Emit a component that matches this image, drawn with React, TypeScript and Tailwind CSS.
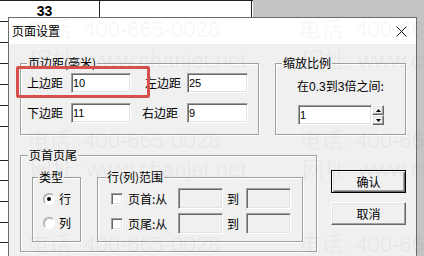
import React from "react";

const sheetRows = [
  "h-[22px] border-t",
  "h-[21px]",
  "h-[21px]",
  "h-[21px]",
  "h-[21px]",
  "h-[21px]",
  "h-[34px]",
  "h-[20px]",
  "h-[21px]",
  "h-[21px]",
  "h-[20px]",
  "h-[20px]",
];

const marks = [
  { cls: "left-[27px] top-[17px]", text: "电话: 400-665-0028" },
  { cls: "left-[299px] top-[17px]", text: "电话: 400-665-0028" },
  { cls: "left-[30px] top-[48px]", text: "网址: www.chanjet.net" },
  { cls: "left-[302px] top-[48px]", text: "网址: www.chanjet.net" },
  { cls: "left-[27px] top-[128px]", text: "电话: 400-665-0028" },
  { cls: "left-[299px] top-[128px]", text: "电话: 400-665-0028" },
  { cls: "left-[30px] top-[157px]", text: "网址: www.chanjet.net" },
  { cls: "left-[302px] top-[157px]", text: "网址: www.chanjet.net" },
  { cls: "left-[27px] top-[232px]", text: "电话: 400-665-0028" },
  { cls: "left-[299px] top-[232px]", text: "电话: 400-665-0028" },
];

const sunken =
  "border border-t-[#a0a0a0] border-l-[#a0a0a0] border-r-white border-b-white shadow-[inset_1px_1px_0_#696969,inset_-1px_-1px_0_#e3e3e3]";

const raised =
  "border border-t-white border-l-white border-r-[#696969] border-b-[#696969] shadow-[inset_-1px_-1px_0_#a0a0a0,inset_1px_1px_0_#e3e3e3]";

const GroupBox = ({ title, box, legend, children }: any) => {
  return (
    <div
      className={`relative border border-[#a0a0a0] shadow-[1px_1px_0_#fff,inset_1px_1px_0_#fff] ${box}`}
    >
      <span
        className={`absolute -top-[9px] bg-[#f0f0f0] px-[1px] text-[12px] leading-[16px] ${legend}`}
      >
        {title}
      </span>
      {children}
    </div>
  );
};

const Field = ({ value, w, off }: any) => {
  return (
    <div
      className={`flex items-center pl-[1px] text-[11px] font-['Liberation_Sans',sans-serif] ${sunken} ${w} ${
        off ? "bg-[#f0f0f0]" : "bg-white"
      }`}
    >
      {value}
    </div>
  );
};

const Radio = ({ checked }: any) => {
  return (
    <div className="flex h-[12px] w-[12px] items-center justify-center rounded-full border border-t-[#a0a0a0] border-l-[#a0a0a0] border-r-white border-b-white bg-white shadow-[inset_1px_1px_0_#c8c8c8]">
      {checked && <div className="h-[4px] w-[4px] rounded-full bg-black" />}
    </div>
  );
};

const Sheet = () => {
  return (
    <div className="w-[253px] bg-white">
      {sheetRows.map((h, i) => (
        <div key={i} className={`flex border-b border-[#222] ${h}`}>
          <div className="flex w-[100px] items-center justify-center border-r border-[#222] pr-[10px]">
            {i === 0 && (
              <span className="font-['Liberation_Sans',sans-serif] text-[14px] font-bold leading-[20px]">
                33
              </span>
            )}
          </div>
          <div className="w-[152px] border-r border-[#222]" />
        </div>
      ))}
    </div>
  );
};

const Dialog = () => {
  return (
    <div className="absolute left-[8px] top-[17px] flex h-[250px] w-[409px] flex-col border border-[#6b6b6b] bg-[#f0f0f0]">
      <div className="flex h-[26px] items-center justify-between bg-white pl-[3px] pr-[9px]">
        <span className="text-[12px] leading-[16px]">页面设置</span>
        <svg width="11" height="11" viewBox="0 0 11 11">
          <path d="M0.5 0.5L10.5 10.5M10.5 0.5L0.5 10.5" stroke="#111" strokeWidth="1" />
        </svg>
      </div>

      <div className="pl-[11px] pt-[19px] text-[12px] leading-[16px]">
        <div className="flex gap-[16px]">
          <GroupBox title="页边距(毫米)" box="w-[239px] h-[72px]" legend="left-[6px]">
            <div className="flex flex-col gap-[10px] pl-[6px] pt-[9px]">
              <div className="flex h-[20px] items-center">
                <span className="w-[44px]">上边距</span>
                <Field value="10" w="w-[60px] h-[20px]" />
                <span className="ml-[14px] w-[42px]">左边距</span>
                <Field value="25" w="w-[61px] h-[20px]" />
              </div>
              <div className="flex h-[20px] items-center">
                <span className="w-[44px]">下边距</span>
                <Field value="11" w="w-[60px] h-[20px]" />
                <span className="ml-[11px] w-[45px]">右边距</span>
                <Field value="9" w="w-[61px] h-[20px]" />
              </div>
            </div>
          </GroupBox>

          <GroupBox title="缩放比例" box="w-[131px] h-[72px]" legend="left-[6px]">
            <div className="pl-[21px] pt-[14px]">
              <p>
                在<span className="font-['Liberation_Sans',sans-serif]">0.3</span>到
                <span className="font-['Liberation_Sans',sans-serif]">3</span>倍之间:
              </p>
              <div className="ml-[1px] mt-[10px] flex">
                <Field value="1" w="w-[74px] h-[20px]" />
                <div className="flex flex-col">
                  <div className={`flex h-[10px] w-[12px] items-center justify-center bg-[#f0f0f0] ${raised}`}>
                    <svg width="5" height="3" viewBox="0 0 5 3">
                      <path d="M2.5 0L5 3H0Z" fill="#000" />
                    </svg>
                  </div>
                  <div className={`flex h-[10px] w-[12px] items-center justify-center bg-[#f0f0f0] ${raised}`}>
                    <svg width="5" height="3" viewBox="0 0 5 3">
                      <path d="M0 0H5L2.5 3Z" fill="#000" />
                    </svg>
                  </div>
                </div>
              </div>
            </div>
          </GroupBox>
        </div>

        <div className="mt-[20px] flex">
          <GroupBox title="页首页尾" box="w-[297px] h-[97px]" legend="left-[7px]">
            <div className="flex gap-[16px] pl-[11px] pt-[21px]">
              <GroupBox title="类型" box="w-[49px] h-[65px]" legend="left-[5px]">
                <div className="flex flex-col gap-[8px] pl-[10px] pt-[13px]">
                  <div className="flex h-[16px] items-center gap-[4px]">
                    <Radio checked />
                    <span>行</span>
                  </div>
                  <div className="flex h-[16px] items-center gap-[4px]">
                    <Radio />
                    <span>列</span>
                  </div>
                </div>
              </GroupBox>

              <GroupBox title="行(列)范围" box="w-[206px] h-[65px]" legend="left-[8px]">
                <div className="flex flex-col gap-[4px] pl-[13px] pt-[10px]">
                  {["页首", "页尾"].map((label) => (
                    <div key={label} className="flex h-[21px] items-center">
                      <div className={`h-[12px] w-[12px] bg-white ${sunken}`} />
                      <span className="ml-[5px] w-[50px]">{label}:从</span>
                      <Field value="" w="w-[45px] h-[21px]" off />
                      <span className="w-[23px] pl-[4px]">到</span>
                      <Field value="" w="w-[45px] h-[21px]" off />
                    </div>
                  ))}
                </div>
              </GroupBox>
            </div>
          </GroupBox>

          <div className="ml-[14px] mt-[15px] flex flex-col gap-[9px]">
            <button className="flex h-[23px] w-[75px] items-center justify-center border border-black bg-[#f0f0f0] shadow-[inset_1px_1px_0_#fff,inset_-1px_-1px_0_#696969,inset_2px_2px_0_#e3e3e3,inset_-2px_-2px_0_#a0a0a0]">
              确认
            </button>
            <button className={`flex h-[23px] w-[75px] items-center justify-center bg-[#f0f0f0] ${raised}`}>
              取消
            </button>
          </div>
        </div>
      </div>
    </div>
  );
};

export default function App() {
  return (
    <div className="relative h-[256px] w-[424px] overflow-hidden bg-[#c4c4c4] font-['Noto_Sans_CJK_SC',sans-serif] text-black">
      <div className="flex h-full">
        <Sheet />
      </div>

      <Dialog />

      <div className="pointer-events-none absolute left-[16px] top-[66px] h-[32px] w-[134px] rounded-[2px] border-[3px] border-[#d6504c]" />

      {marks.map((m, i) => (
        <span
          key={i}
          className={`pointer-events-none absolute whitespace-nowrap font-['Liberation_Sans','Noto_Sans_CJK_SC',sans-serif] text-[22px] leading-[26px] text-[#0000000e] ${m.cls}`}
        >
          {m.text}
        </span>
      ))}
    </div>
  );
}
